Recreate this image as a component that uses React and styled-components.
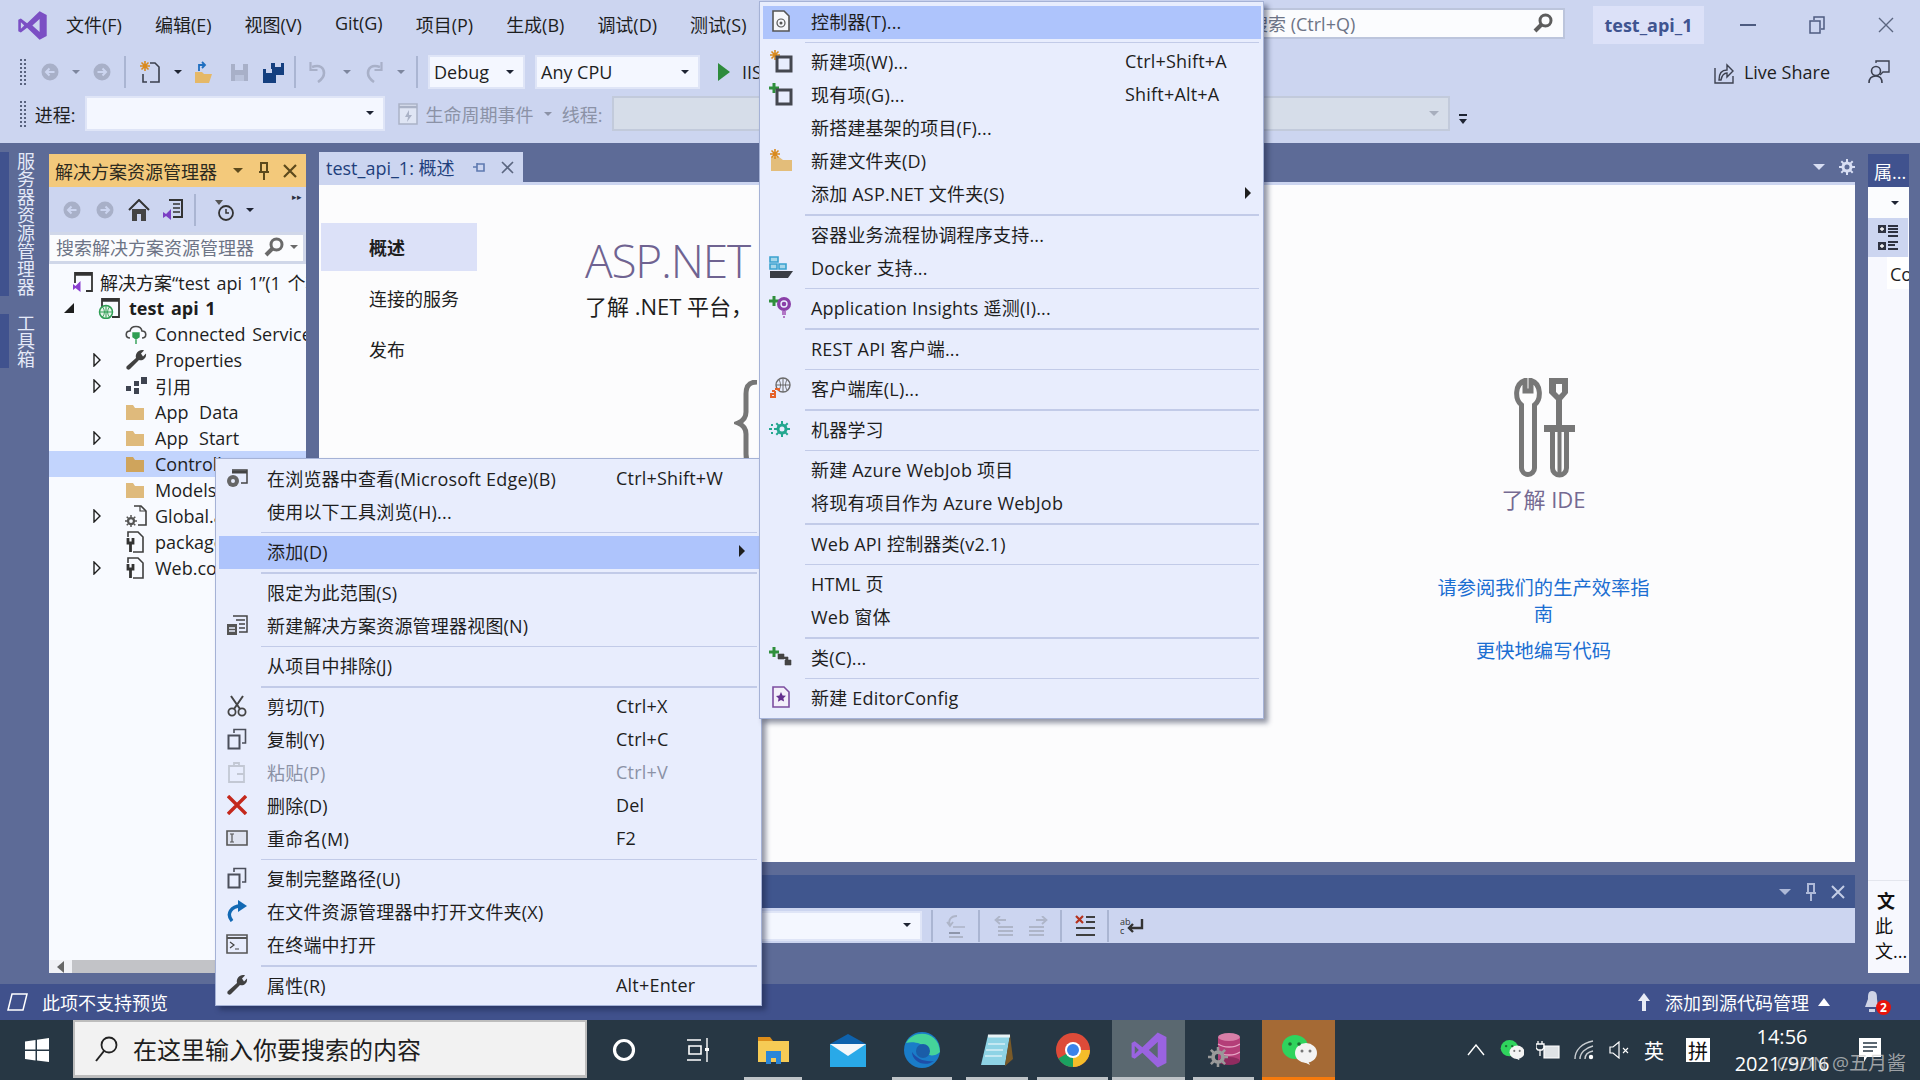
import React from "react";
import styled, { createGlobalStyle } from "styled-components";

const FONT = `"Open Sans", "Noto Sans CJK SC", sans-serif`;

const GlobalStyle = createGlobalStyle`
  html, body { margin: 0; padding: 0; background: #5d6b97; }
  body { font-family: ${FONT}; font-size: 18px; color: #1e1e1e; }
  * { box-sizing: border-box; }
`;

const Page = styled.div`
  position: relative;
  width: 1920px;
  height: 1080px;
  overflow: hidden;
  display: flex;
  flex-direction: column;
  background: #5d6b97;
`;

/* ---------- top chrome ---------- */
const TitleBar = styled.div`
  height: 50px;
  flex: none;
  display: flex;
  align-items: center;
  padding-left: 17px;
  background: #ccd5f0;
`;
const MenuList = styled.div`
  display: flex;
  gap: 33px;
  margin-left: 18px;
  padding-bottom: 2px;
  white-space: nowrap;
`;
const SearchBox = styled.div`
  margin-left: auto;
  margin-bottom: 3px;
  width: 324px;
  height: 31px;
  display: flex;
  align-items: center;
  justify-content: space-between;
  padding: 0 10px 2px 7px;
  background: #fbfcfe;
  border: 2px solid #bcc5dc;
  color: #6d7486;
`;
const ProjectBadge = styled.div`
  margin-left: 28px;
  width: 111px;
  height: 38px;
  display: flex;
  align-items: center;
  justify-content: center;
  background: #dce1f8;
  color: #3f5490;
  font-weight: 700;
  margin-right: 9px;
`;
const WinButton = styled.div`
  width: 69px;
  height: 38px;
  display: flex;
  align-items: center;
  justify-content: center;
`;
const ToolRow = styled.div`
  flex: none;
  height: ${(p) => p.$h}px;
  display: flex;
  align-items: ${(p) => (p.$top ? "flex-start" : "center")};
  padding: ${(p) => (p.$top ? "2px 0 0 19px" : "0 0 0 19px")};
  background: #ccd5f0;
  white-space: nowrap;
`;
const Grip = styled.div`
  width: 8px;
  height: ${(p) => p.$h || 28}px;
  flex: none;
  background-image: radial-gradient(#59637f 1px, transparent 1.2px);
  background-size: 4px 4px;
`;
const Slot = styled.div`
  flex: none;
  width: ${(p) => p.$w}px;
  height: ${(p) => p.$h || 34}px;
  display: flex;
  align-items: center;
  justify-content: center;
`;
const Gap = styled.div`
  flex: none;
  width: ${(p) => p.$w}px;
`;
const Sep = styled.div`
  flex: none;
  width: 2px;
  height: 32px;
  background: #aab5d2;
`;
const Combo = styled.div`
  flex: none;
  width: ${(p) => p.$w}px;
  height: ${(p) => p.$h || 34}px;
  display: flex;
  align-items: center;
  justify-content: space-between;
  padding: 0 9px 1px 4px;
  background: ${(p) => (p.$off ? "#d6dde9" : "#f4f7ff")};
  border: 2px solid ${(p) => (p.$off ? "#c2cadb" : "#dfe5f7")};
`;
const Caret = styled.span`
  flex: none;
  display: inline-block;
  width: 0;
  height: 0;
  border-left: ${(p) => p.$s || 4}px solid transparent;
  border-right: ${(p) => p.$s || 4}px solid transparent;
  border-top: ${(p) => p.$s || 4}px solid ${(p) => p.$c || "#1e2433"};
`;
const FadedLabel = styled.span`
  color: #8b92a6;
  white-space: nowrap;
`;
const ToolLabel = styled.span`
  margin-left: 10px;
`;
const RightGroup = styled.div`
  margin-left: auto;
  display: flex;
  align-items: center;
  padding-right: 30px;
`;

/* ---------- workspace ---------- */
const Workspace = styled.div`
  flex: 1;
  min-height: 0;
  display: flex;
  padding-top: 9px;
  background: #5d6b97;
`;
const LeftRail = styled.div`
  flex: none;
  width: 49px;
  display: flex;
  flex-direction: column;
  gap: 18px;
`;
const VTab = styled.div`
  width: 35px;
  height: ${(p) => p.$h}px;
  border-left: 9px solid #40528e;
  padding-left: 6px;
  writing-mode: vertical-rl;
  line-height: 20px;
  color: #e4e9f8;
  white-space: nowrap;
`;
const SolutionPanel = styled.div`
  flex: none;
  width: 257px;
  margin: 2px 0 11px;
  display: flex;
  flex-direction: column;
  background: #f8faff;
`;
const ActiveHeader = styled.div`
  flex: none;
  height: 33px;
  display: flex;
  align-items: center;
  padding-left: 6px;
  background: #f3c97b;
  color: #2c2a20;
  white-space: nowrap;
`;
const HeaderTools = styled.div`
  margin-left: auto;
  display: flex;
  align-items: center;
`;
const PanelTools = styled.div`
  flex: none;
  height: 45px;
  display: flex;
  align-items: center;
  background: #ccd5f0;
  position: relative;
`;
const Chevrons = styled.span`
  position: absolute;
  right: 4px;
  top: 3px;
  font-size: 9px;
  color: #2b3040;
`;
const PanelSearch = styled.div`
  flex: none;
  height: 32px;
  display: flex;
  align-items: center;
  padding: 0 5px 2px 6px;
  background: #fbfcfe;
  border: 3px solid #d0d7e9;
  border-left-width: 1px;
  color: #6d7486;
  white-space: nowrap;
  overflow: hidden;
`;
const Tree = styled.div`
  flex: 1;
  min-height: 0;
  padding-top: 5px;
  overflow: hidden;
`;
const TreeRow = styled.div`
  height: 26px;
  display: flex;
  align-items: center;
  padding-left: ${(p) => p.$pad}px;
  background: ${(p) => (p.$sel ? "#c2d4fd" : "transparent")};
  font-weight: ${(p) => (p.$bold ? 700 : 400)};
  word-spacing: ${(p) => p.$ws || 0}px;
  white-space: nowrap;
  overflow: hidden;
`;
const TreeExpander = styled.span`
  flex: none;
  width: ${(p) => p.$w}px;
  display: flex;
  align-items: center;
`;
const TreeIcon = styled.span`
  flex: none;
  width: ${(p) => p.$w || 30}px;
  display: flex;
  align-items: center;
`;
const HScroll = styled.div`
  flex: none;
  height: 13px;
  display: flex;
  align-items: center;
  background: #f0f1f5;
  padding-left: 8px;
  gap: 7px;
`;
const HThumb = styled.div`
  width: 150px;
  height: 13px;
  background: #c2c3c7;
`;

const Center = styled.div`
  flex: none;
  width: 1536px;
  margin-left: 13px;
  display: flex;
  flex-direction: column;
`;
const TabStrip = styled.div`
  flex: none;
  height: 30px;
  display: flex;
  align-items: center;
`;
const DocTab = styled.div`
  width: 204px;
  height: 30px;
  display: flex;
  align-items: center;
  padding-left: 7px;
  background: #ccd5f0;
  color: #1f3f7c;
  white-space: nowrap;
`;
const DocContent = styled.div`
  flex: none;
  height: 680px;
  border-top: 3px solid #ccd5f0;
  background: #fcfcfd;
  display: grid;
  grid-template-columns: 266px 851px 215px;
`;
const Nav = styled.div`
  padding: 38px 0 0 2px;
  display: flex;
  flex-direction: column;
  gap: 3px;
`;
const NavItem = styled.div`
  height: 48px;
  width: 156px;
  display: flex;
  align-items: center;
  padding-left: 48px;
  background: ${(p) => (p.$on ? "#dce1f8" : "transparent")};
  font-weight: ${(p) => (p.$on ? 700 : 400)};
`;
const Hero = styled.div`
  padding-top: 47px;
`;
const HeroTitle = styled.div`
  font-size: 46px;
  line-height: 56px;
  font-weight: 300;
  color: #6f6391;
  letter-spacing: -1.2px;
`;
const HeroText = styled.div`
  margin-top: 4px;
  font-size: 22px;
  line-height: 28px;
`;
const Brace = styled.svg`
  display: block;
  margin: 60px 0 0 149px;
`;
const IdeColumn = styled.div`
  padding-top: 193px;
  display: flex;
  flex-direction: column;
  align-items: center;
  text-align: center;
`;
const IdeLabel = styled.div`
  margin-top: 7px;
  font-size: 22px;
  line-height: 28px;
  color: #756a92;
`;
const IdeLink = styled.div`
  margin-top: ${(p) => p.$mt}px;
  font-size: 19.3px;
  line-height: 26px;
  color: #1b6ed2;
`;
const OutputPanel = styled.div`
  flex: none;
  margin-top: 13px;
  height: 68px;
  display: flex;
  flex-direction: column;
`;
const OutputHeader = styled.div`
  height: 33px;
  display: flex;
  align-items: center;
  justify-content: flex-end;
  background: #40568e;
`;
const OutputTools = styled.div`
  height: 35px;
  display: flex;
  align-items: center;
  background: #ccd5f0;
`;
const Props = styled.div`
  flex: none;
  width: 41px;
  margin: 2px 0 11px 13px;
  display: flex;
  flex-direction: column;
  background: #f7f8fe;
  overflow: hidden;
`;
const PropsTab = styled.div`
  height: 33px;
  display: flex;
  align-items: center;
  padding-left: 6px;
  background: #40528e;
  color: #fff;
  white-space: nowrap;
`;
const PropsCombo = styled.div`
  height: 31px;
  display: flex;
  align-items: center;
  justify-content: flex-end;
  padding-right: 10px;
  background: #fbfcfe;
`;
const PropsIcon = styled.div`
  height: 39px;
  margin-right: 1px;
  display: flex;
  align-items: center;
  justify-content: center;
  background: #ccd5f0;
`;
const PropsCell = styled.div`
  height: 32px;
  margin-left: 19px;
  padding: 5px 0 0 3px;
  background: #fff;
  overflow: hidden;
`;
const PropsNote = styled.div`
  margin-top: auto;
  border-top: 1px solid #e4e6ee;
  padding: 8px 0 0 7px;
  height: 93px;
  line-height: 25px;
  color: #111;
`;
const PropsNoteHead = styled.div`
  padding-left: 2px;
  font-weight: 700;
`;

/* ---------- context menus ---------- */
const Menu = styled.div`
  position: absolute;
  left: ${(p) => p.$x}px;
  top: ${(p) => p.$y}px;
  width: ${(p) => p.$w}px;
  padding: 3.5px 2px 2.5px 3px;
  background: #e8edfd;
  border: 1px solid #a5b2d6;
  box-shadow: 4px 4px 5px rgba(20, 28, 60, 0.45);
  white-space: nowrap;
  letter-spacing: 0.2px;
`;
const MenuRow = styled.div`
  height: 33px;
  padding-bottom: 3px;
  display: grid;
  grid-template-columns: 48px 1fr ${(p) => p.$short}px;
  align-items: center;
  background: ${(p) => (p.$hot ? "#aec4fc" : "transparent")};
  color: ${(p) => (p.$off ? "#8b92a6" : "#1e1e1e")};
`;
const MenuIcon = styled.span`
  width: 36px;
  display: flex;
  align-items: center;
  justify-content: center;
`;
const SubArrow = styled.span`
  justify-self: end;
  margin-right: ${(p) => p.$mr}px;
  width: 0;
  height: 0;
  border-top: 6px solid transparent;
  border-bottom: 6px solid transparent;
  border-left: 6px solid #1e1e1e;
`;
const MenuSep = styled.div`
  height: 1.5px;
  margin: 3px 2px 3px 42px;
  background: #c2cbe8;
`;

/* ---------- status + taskbar ---------- */
const StatusBar = styled.div`
  flex: none;
  height: 36px;
  display: flex;
  align-items: center;
  padding-left: 6px;
  background: #40518c;
  color: #fff;
  white-space: nowrap;
`;
const StatusRight = styled.div`
  margin-left: auto;
  display: flex;
  align-items: center;
  padding-right: 39px;
`;
const BellWrap = styled.span`
  position: relative;
  display: flex;
  margin-left: 33px;
`;
const Badge = styled.span`
  position: absolute;
  left: 13px;
  top: 10px;
  width: 15px;
  height: 15px;
  border-radius: 50%;
  background: #e8130c;
  color: #fff;
  font-size: 12px;
  font-weight: 700;
  line-height: 15px;
  text-align: center;
`;
const Taskbar = styled.div`
  flex: none;
  height: 60px;
  display: flex;
  background: #273744;
  color: #fff;
  white-space: nowrap;
`;
const TaskSearch = styled.div`
  flex: none;
  width: 514px;
  height: 58px;
  display: flex;
  align-items: center;
  gap: 15px;
  padding-left: 19px;
  background: #f2f2f2;
  border: 2px solid #bdbdbd;
  border-bottom-width: 3px;
  color: #1e1e1e;
  font-size: 24px;
`;
const TaskItem = styled.div`
  position: relative;
  flex: none;
  width: ${(p) => p.$w}px;
  display: flex;
  align-items: center;
  justify-content: center;
  background: ${(p) => p.$bg || "transparent"};
  font-size: ${(p) => p.$fs || 18}px;
  &::after {
    content: "";
    display: ${(p) => (p.$open ? "block" : "none")};
    position: absolute;
    left: ${(p) => p.$inset || 0}px;
    right: ${(p) => p.$inset || 0}px;
    bottom: 0;
    height: 3px;
    background: ${(p) => p.$line || "#bfc4c8"};
  }
`;
const Tray = styled.div`
  margin-left: 123px;
  display: flex;
`;
const Clock = styled.div`
  flex: none;
  width: 116px;
  padding-top: 3px;
  font-size: 20px;
  line-height: 27px;
  text-align: center;
`;
const ImeBox = styled.span`
  display: flex;
  align-items: center;
  justify-content: center;
  width: 24px;
  height: 24px;
  background: #fff;
  color: #111;
  font-size: 20px;
`;
const Watermark = styled.div`
  position: absolute;
  right: 14px;
  bottom: 4px;
  font-size: 19px;
  color: rgba(205, 205, 205, 0.72);
  white-space: nowrap;
`;

/* ---------- icons ---------- */
const Svg = ({ w = 20, h = 20, box, children }) => (
  <svg width={w} height={h} viewBox={box || `0 0 ${w} ${h}`} fill="none">
    {children}
  </svg>
);
const VsLogo = ({ w = 31, h = 31, c = "#7b4fc4" }) => (
  <Svg w={w} h={h} box="0 0 24 24">
    <path
      fillRule="evenodd"
      fill={c}
      d="M17.5 1 23 3.8v16.4L17.5 23l-9.7-9.3L3 17.5 1 16.5v-9L3 6.5l4.8 3.8zM17.5 7l-5.6 5 5.6 5zM3 9.5v5l2.6-2.5z"
    />
  </Svg>
);
const NavCircle = ({ dir = 1, c = "#a8b0c8" }) => (
  <Svg w={18} h={18}>
    <circle cx="9" cy="9" r="8.5" fill={c} />
    <path
      d={dir > 0 ? "M4.500 9h8M9.500 5.500 13 9l-3.500 3.500" : "M13.500 9h-8M8.500 5.500 5 9l3.500 3.500"}
      stroke="#ccd5f0"
      strokeWidth="2"
    />
  </Svg>
);
const Spark = ({ x, y }) => (
  <g stroke="#d98a1e" strokeWidth="1.6">
    <path d={`M${x - 5} ${y}h10M${x} ${y - 5}v10M${x - 3.5} ${y - 3.5}l7 7M${x + 3.5} ${y - 3.5}l-7 7`} />
  </g>
);
const Plus = ({ x, y }) => (
  <path d={`M${x - 5} ${y}h10M${x} ${y - 5}v10`} stroke="#2f8f3c" strokeWidth="3" />
);
const NewFile = () => (
  <Svg w={20} h={22}>
    <Spark x={5} y={5} />
    <path d="M10 2h5l4 4v15h-9" stroke="#3a3f4d" strokeWidth="1.6" />
    <path d="M3 13v8h4" stroke="#3a3f4d" strokeWidth="1.6" />
  </Svg>
);
const OpenFolder = () => (
  <Svg w={20} h={22}>
    <path d="M1 11h7l2 2h8l-3 9H1z" fill="#e5b867" />
    <path d="M5 10V4h6M8 1l3 3-3 3" stroke="#1f6fc0" strokeWidth="1.800" />
  </Svg>
);
const Floppy = ({ c = "#a8b0c8" }) => (
  <Svg w={19} h={19}>
    <path d="M1 1h17v17H1z" fill={c} />
    <path d="M5 1h8v6H5z" fill="#ccd5f0" />
    <path d="M5 12h9v6H5z" fill="#ccd5f0" opacity=".5" />
  </Svg>
);
const SaveAll = () => (
  <Svg w={23} h={21}>
    <path d="M9 1h13v12H9z" fill="#143f7f" />
    <path d="M13 1h6v4h-6z" fill="#ccd5f0" />
    <path d="M1 7h13v14H1z" fill="#143f7f" />
    <path d="M4 7h6v4H4z" fill="#ccd5f0" />
  </Svg>
);
const Undo = ({ flip }) => (
  <Svg w={20} h={22}>
    <g transform={flip ? "matrix(-1 0 0 1 20 0)" : undefined}>
      <path d="M4 6c8-3 12 1 12 6 0 4-3 7-6 9" stroke="#a8b0c8" strokeWidth="2.600" />
      <path d="M2.500 1v8h7" stroke="#a8b0c8" strokeWidth="2.200" />
    </g>
  </Svg>
);
const Play = () => (
  <Svg w={12} h={18}>
    <path d="M0 0l12 9-12 9z" fill="#2e8b3c" />
  </Svg>
);
const Magnifier = ({ c = "#5d5d5d", s = 20 }) => (
  <Svg w={s} h={s} box="0 0 20 20">
    <circle cx="12.5" cy="7.5" r="5.5" stroke={c} strokeWidth="3" />
    <path d="M8.5 11.5 2 18" stroke={c} strokeWidth="4" />
  </Svg>
);
const Cross = ({ c = "#5b6680", s = 14, sw = 1.6 }) => (
  <Svg w={s} h={s}>
    <path d={`M1 1 ${s - 1} ${s - 1}M${s - 1} 1 1 ${s - 1}`} stroke={c} strokeWidth={sw} />
  </Svg>
);
const Pin = ({ c = "#5d4a1c" }) => (
  <Svg w={12} h={18}>
    <path d="M3 1h6v9H3zM1 10h10M6 10v8" stroke={c} strokeWidth="2" />
  </Svg>
);
const SmallPin = () => (
  <Svg w={14} h={12}>
    <path d="M1 6h4M5 2v8h7V3H5" stroke="#5e79b0" strokeWidth="1.6" />
  </Svg>
);
const Gear = ({ c = "#d8def3", s = 16 }) => (
  <Svg w={s} h={s} box="0 0 16 16">
    <circle cx="8" cy="8" r="4" stroke={c} strokeWidth="3" />
    <path
      d="M8 0v3M8 13v3M0 8h3M13 8h3M2.3 2.3l2.1 2.1M11.6 11.6l2.1 2.1M13.7 2.3l-2.1 2.1M4.4 11.6l-2.1 2.1"
      stroke={c}
      strokeWidth="2"
    />
  </Svg>
);
const Home = () => (
  <Svg w={22} h={22}>
    <path d="M1 11 11 1l10 10" stroke="#333" strokeWidth="2" />
    <path d="M4 10v12h5v-7h4v7h5V10" fill="#444" />
  </Svg>
);
const VsDoc = () => (
  <Svg w={22} h={22}>
    <path d="M7 1h13v17h-9" stroke="#333" strokeWidth="2" />
    <path d="M11 5h7M11 9h7M11 13h7" stroke="#333" strokeWidth="1.6" />
    <path d="M1 13l3 2 5-5v11l-5-4-3 2z" fill="#7b3fc4" />
  </Svg>
);
const History = () => (
  <Svg w={20} h={24}>
    <circle cx="12" cy="15" r="7" stroke="#333" strokeWidth="1.8" />
    <path d="M12 11v4h3" stroke="#333" strokeWidth="1.5" />
    <path d="M1 2h8L5 7z" fill="#555" />
  </Svg>
);
const SlnIcon = () => (
  <Svg w={22} h={22}>
    <path d="M3 12V2h17v18h-6" stroke="#333" strokeWidth="1.8" />
    <path d="M3 3.500h17" stroke="#333" strokeWidth="2.500" />
    <path d="M1 13l2.500 2 5-5v11l-5-4L1 19z" fill="#8a3fd0" />
  </Svg>
);
const WebProject = () => (
  <Svg w={22} h={22}>
    <path d="M4 10V2h17v18h-7" stroke="#333" strokeWidth="1.8" />
    <path d="M4 3.500h17" stroke="#333" strokeWidth="2.500" />
    <circle cx="8" cy="15" r="6.500" fill="#e8f4ea" stroke="#2f9e54" strokeWidth="1.5" />
    <path d="M1.500 15h13M8 8.500v13M4.500 10c2.500 3 2.500 7 0 10M11.500 10c-2.500 3-2.500 7 0 10" stroke="#2f9e54" strokeWidth="1" />
  </Svg>
);
const CloudPlug = () => (
  <Svg w={22} h={22}>
    <path d="M5 15c-5 0-5-7 0-7 1-6 11-6 12 0 5 0 5 7 0 7" stroke="#4a4a4a" strokeWidth="1.6" />
    <path d="M8 10h6v4l-3 2-3-2zM11 16v5" fill="#2f9e54" stroke="#2f9e54" strokeWidth="1.4" />
  </Svg>
);
const Wrench = ({ c = "#404040", s = 22 }) => (
  <Svg w={s} h={s} box="0 0 22 22">
    <path
      d="M21 6c0 4-4 6-7 5l-9 9c-2 2-5-1-3-3l9-8c-1-4 2-8 6-8 1 0 1.500 0 2 .500l-3 3 2 3 3-3c.300.500 0 1 0 1.500z"
      fill={c}
    />
  </Svg>
);
const Refs = () => (
  <Svg w={22} h={20}>
    <path d="M16 1h6v7h-6zM9 5h5v5H9zM1 10h5v5H1zM9 12h5v6H9z" fill="#3e4350" />
  </Svg>
);
const Folder = ({ c = "#dfba7c" }) => (
  <Svg w={20} h={17}>
    <path d="M1 1h7l2 3h9v12H1z" fill={c} />
  </Svg>
);
const GearFile = () => (
  <Svg w={22} h={22}>
    <path d="M9 1h7l5 5v14h-8" stroke="#3f3f3f" strokeWidth="1.6" />
    <path d="M15 1v5h6" stroke="#3f3f3f" strokeWidth="1.2" />
    <g transform="translate(0 10)">
      <Gear c="#555" s={12} />
    </g>
  </Svg>
);
const ConfigFile = () => (
  <Svg w={20} h={22}>
    <path d="M3 6V1h10l5 5v15H8" stroke="#3f3f3f" strokeWidth="1.6" />
    <path d="M3 7v5h5V7M5.500 12v9" stroke="#333" strokeWidth="2.800" />
  </Svg>
);
const Triangle = ({ open }) =>
  open ? (
    <Svg w={10} h={10}>
      <path d="M10 0v10H0z" fill="#1e1e1e" />
    </Svg>
  ) : (
    <Svg w={8} h={14}>
      <path d="M1 1l6 6-6 6z" stroke="#1e1e1e" strokeWidth="1.4" fill="#f8faff" />
    </Svg>
  );
const BrowserIcon = () => (
  <Svg w={22} h={20}>
    <path d="M6 2h15v13h-6" stroke="#444" strokeWidth="1.5" />
    <path d="M6 4h15" stroke="#444" strokeWidth="3" />
    <circle cx="7" cy="13" r="6" fill="#666" />
    <circle cx="7" cy="13" r="2" fill="#e8edfd" />
  </Svg>
);
const SolutionView = () => (
  <Svg w={22} h={22}>
    <path d="M1 10h10v11H1z" fill="#555" />
    <path d="M7 2h14v16h-8" stroke="#444" strokeWidth="1.5" />
    <path d="M10 6h9M13 10h6M13 14h6" stroke="#444" strokeWidth="1.4" />
    <path d="M3 14h6M3 17h6" stroke="#e8edfd" strokeWidth="1.3" />
  </Svg>
);
const Scissors = () => (
  <Svg w={20} h={22}>
    <path d="M4 1l9 13M16 1 7 14" stroke="#444" strokeWidth="2" />
    <circle cx="5" cy="17" r="3.600" stroke="#444" strokeWidth="1.8" />
    <circle cx="15" cy="17" r="3.600" stroke="#444" strokeWidth="1.8" />
  </Svg>
);
const Copy = ({ c = "#4b4f5b" }) => (
  <Svg w={20} h={22}>
    <path d="M1.500 7.500h11v13h-11z" fill="#e8edfd" stroke={c} strokeWidth="2" />
    <path d="M7 5V1.500h11.500V15H15" stroke={c} strokeWidth="1.6" />
  </Svg>
);
const Paste = () => (
  <Svg w={20} h={22}>
    <path d="M2 5h15v16H2zM7 5V2h5v3M10 13h7v8h-7" stroke="#c3c8d4" strokeWidth="1.8" />
  </Svg>
);
const Rename = () => (
  <Svg w={22} h={16}>
    <path d="M1 1h20v14H1z" fill="#dfe3f0" stroke="#555" strokeWidth="1.6" />
    <path d="M4 4h4M4 12h4M6 4v8" stroke="#555" strokeWidth="1.2" />
  </Svg>
);
const OpenArrow = () => (
  <Svg w={22} h={22}>
    <path d="M6 21C0 14 5 6 15 6" stroke="#1269b4" strokeWidth="3.400" />
    <path d="M12 0l9 6-9 6z" fill="#1269b4" />
  </Svg>
);
const Terminal = () => (
  <Svg w={22} h={20}>
    <path d="M1 1h20v18H1z" fill="#e8edfd" stroke="#555" strokeWidth="1.6" />
    <path d="M1 4h20" stroke="#555" strokeWidth="2" />
    <path d="M4 8l4 3-4 3M9 15h4" stroke="#444" strokeWidth="1.2" />
  </Svg>
);
const AtFile = () => (
  <Svg w={20} h={22}>
    <path d="M2 1h11l5 5v15H2z" fill="#f6f7fb" stroke="#555" strokeWidth="1.6" />
    <circle cx="10" cy="13" r="4" stroke="#555" strokeWidth="1.2" />
    <circle cx="10" cy="13" r="1.500" fill="#555" />
  </Svg>
);
const NewItem = ({ add }) => (
  <Svg w={24} h={24}>
    {add ? <Plus x={5} y={6} /> : <Spark x={6} y={6} />}
    <path d="M8 8h14v14H8z" stroke="#44474f" strokeWidth="3" />
  </Svg>
);
const NewFolder = () => (
  <Svg w={24} h={24}>
    <path d="M2 9h8l4 3h9v11H2z" fill="#e3bd7a" />
    <Spark x={6} y={6} />
  </Svg>
);
const Docker = () => (
  <Svg w={24} h={22}>
    <path d="M1 1h8v5H1zM1 8h7v5H1zM10 8h7v5h-7z" stroke="#3aa2cf" strokeWidth="1.6" fill="#a8d7ea" />
    <path d="M1 15h23l-5 7H1z" fill="#3a3d45" />
  </Svg>
);
const Insights = () => (
  <Svg w={24} h={24}>
    <Plus x={5} y={6} />
    <circle cx="15" cy="9" r="7" fill="#8a3fa8" />
    <circle cx="15" cy="9" r="3" stroke="#e8edfd" strokeWidth="1.4" />
    <path d="M13 16h4v4h-4zM14 21h2v2h-2z" fill="#b176c6" />
  </Svg>
);
const ClientLib = () => (
  <Svg w={22} h={22}>
    <circle cx="13" cy="8" r="7" stroke="#6a6a6a" strokeWidth="1.4" />
    <path d="M6 8h14M13 1v14M9 3c2 3 2 7 0 10M17 3c-2 3-2 7 0 10" stroke="#6a6a6a" strokeWidth="1" />
    <path d="M2 14h3M5 12h4v2M5 14v6H1v-3h4" stroke="#e5622a" strokeWidth="2" />
  </Svg>
);
const MlIcon = () => (
  <Svg w={24} h={22}>
    <g transform="translate(5 3)">
      <Gear c="#23a78f" s={16} />
    </g>
    <path d="M0 11h3M2 7h2M2 15h2" stroke="#23a78f" strokeWidth="2" />
  </Svg>
);
const ClassIcon = () => (
  <Svg w={24} h={22}>
    <Plus x={5} y={6} />
    <path d="M9 8h6v5H9zM16 14h6v5h-6zM12 11h7v4" fill="#444" stroke="#444" strokeWidth=".6" />
  </Svg>
);
const EditorCfg = () => (
  <Svg w={18} h={22}>
    <path d="M1 1h11l5 5v15H1z" fill="#f3effa" stroke="#7c4ea0" strokeWidth="1.6" />
    <path d="M9 6l1.600 3.400 3.400.4-2.600 2.400.7 3.400L9 14l-3.100 1.800.7-3.400L4 10l3.400-.6z" fill="#65308f" />
  </Svg>
);
const ToolsIcon = () => (
  <Svg w={62} h={100}>
    <path
      d="M8.500 27C2 22 1 6 12 2.500V13h6V2.500C29 6 28 22 21.500 27v63a6.500 6.500 0 0 1-13 0z"
      stroke="#777"
      strokeWidth="5"
    />
    <path d="M36 0h19v15l-6 7v25h-6V22l-7-7z" fill="#777" />
    <path d="M43 6h6v8l-3 3-3-3z" fill="#fcfcfd" />
    <path d="M31 47h31v7H31z" fill="#777" />
    <path d="M39.500 54v36a7 7 0 0 0 14 0V54" stroke="#777" strokeWidth="5" />
    <path d="M46.500 54v42" stroke="#777" strokeWidth="4" />
  </Svg>
);
const WinLogo = () => (
  <Svg w={24} h={24}>
    <path d="M0 3.500 10.500 2v9.500H0zM12 1.800 24 0v11.500H12zM0 13h10.500v9.500L0 21zM12 13h12v11l-12-1.500z" fill="#fff" />
  </Svg>
);
const TaskView = () => (
  <Svg w={24} h={24}>
    <path d="M2 2h14M2 22h14M4 8h12v8H4z" stroke="#fff" strokeWidth="1.600" />
    <path d="M22 0v24" stroke="#fff" strokeWidth="1.400" />
    <path d="M20 10h4v3h-4z" fill="#fff" />
  </Svg>
);
const Explorer = () => (
  <Svg w={33} h={28}>
    <path d="M1 1h12l3 4H1z" fill="#dd8d1a" />
    <path d="M1 5h31v21H1z" fill="#f6cb55" />
    <path d="M9 15h15v13h-5v-6h-5v6H9z" fill="#2a86d8" />
  </Svg>
);
const Mail = () => (
  <Svg w={36} h={33}>
    <path d="M0 10h36v23H0z" fill="#29a9e8" />
    <path d="M0 10h36L18 22z" fill="#f4f7fa" />
    <path d="M18 0 36 10H0z" fill="#0e62ad" />
  </Svg>
);
const Edge = () => (
  <Svg w={36} h={36}>
    <circle cx="18" cy="18" r="18" fill="#1a7cc8" />
    <path d="M2 11C9-3 35-2 36 20c-6 6-17 4-14-4-4-5-13-7-20-5z" fill="#45d39a" />
    <circle cx="19" cy="19" r="7" fill="#1a5da8" />
    <path d="M8 20c0 9 12 16 22 9-10 1-17-2-22-9z" fill="#1e4ea8" />
  </Svg>
);
const Notes = () => (
  <Svg w={34} h={33}>
    <path d="M8 1h22l-5 30H1z" fill="#8ed3e5" />
    <path d="M25 31l5-30 3 24-8 7z" fill="#7a5a28" />
    <path d="M8 2h22" stroke="#e8f3f6" strokeWidth="3" />
    <path d="M8 10h17M6 16h17M5 22h17" stroke="#d8f0f6" strokeWidth="1.400" />
  </Svg>
);
const Chrome = () => (
  <Svg w={34} h={34}>
    <circle cx="17" cy="17" r="17" fill="#dd4b39" />
    <path d="M17 17h17A17 17 0 0 1 17 34z" fill="#f4bd2a" />
    <path d="M17 17v17A17 17 0 0 1 2.300 25.500z" fill="#1ba160" />
    <circle cx="17" cy="17" r="8" fill="#fff" />
    <circle cx="17" cy="17" r="6" fill="#3a83ea" />
  </Svg>
);
const DbIcon = () => (
  <Svg w={32} h={34}>
    <path d="M10 4h22v24H10z" fill="#b43e78" />
    <ellipse cx="21" cy="4" rx="11" ry="4" fill="#d77fa8" />
    <ellipse cx="21" cy="28" rx="11" ry="4" fill="#8f2c60" />
    <path d="M10 11c6 4 16 4 22 0M10 19c6 4 16 4 22 0" stroke="#e6a4c4" strokeWidth="1.400" />
    <g transform="translate(0 14) scale(1.250)">
      <Gear c="#9a9a9a" s={16} />
    </g>
  </Svg>
);
const WeChat = ({ s = 1 }) => (
  <Svg w={36 * s} h={30 * s} box="0 0 36 30">
    <ellipse cx="14" cy="12" rx="13" ry="12" fill="#2fd45d" />
    <ellipse cx="25" cy="18" rx="11" ry="10" fill="#f3f3f3" />
    <path d="M27 26l2 4-6-3z" fill="#f3f3f3" />
    <circle cx="9" cy="9" r="1.800" fill="#1b6e34" />
    <circle cx="18" cy="9" r="1.800" fill="#1b6e34" />
    <circle cx="21" cy="16" r="1.500" fill="#777" />
    <circle cx="29" cy="16" r="1.500" fill="#777" />
  </Svg>
);
const Battery = () => (
  <Svg w={24} h={20}>
    <path d="M8 6h15v12H8z" fill="#dfe3e6" stroke="#fff" strokeWidth="1.200" />
    <path d="M2 1v3M6 1v3M0 4h8v4l-2 2H2L0 8zM4 10v6" stroke="#fff" strokeWidth="1.300" />
  </Svg>
);
const Wifi = () => (
  <Svg w={20} h={20}>
    <path d="M1 19C1 10 8 3 19 1M6 19c0-6 5-11 13-13M11 19c0-4 3-7 8-8" stroke="#c9ced2" strokeWidth="1.400" />
    <circle cx="17" cy="17" r="2.200" fill="#fff" />
  </Svg>
);
const Speaker = () => (
  <Svg w={20} h={18}>
    <path d="M1 6h3l6-5v16l-6-5H1z" stroke="#fff" strokeWidth="1.200" />
    <path d="M14 7l5 5M19 7l-5 5" stroke="#fff" strokeWidth="1.100" />
  </Svg>
);
const NotifIcon = () => (
  <Svg w={24} h={26}>
    <path d="M1 1h22v19H9l-3 5v-5H1z" fill="#fff" />
    <path d="M5 6h14M5 10h14M5 14h10" stroke="#273744" strokeWidth="1.400" />
  </Svg>
);
const ShareIcon = () => (
  <Svg w={20} h={24}>
    <path d="M1 8v15h18v-7" stroke="#3c4150" strokeWidth="1.400" />
    <path d="M5 20c0-7 3-10 8-10V5l6 6-6 6v-4c-3 0-5 2-6 7z" stroke="#3c4150" strokeWidth="1.400" />
  </Svg>
);
const Feedback = () => (
  <Svg w={22} h={24}>
    <circle cx="8" cy="11" r="4.500" stroke="#3c4150" strokeWidth="1.600" />
    <path d="M1 23c0-5 3-7 7-7s6 2 6 7" stroke="#3c4150" strokeWidth="1.600" />
    <path d="M8 3V1h13v11h-6l-3 3" stroke="#3c4150" strokeWidth="1.400" />
  </Svg>
);
const Lifecycle = () => (
  <Svg w={20} h={22}>
    <path d="M1 1h18v20H1z" fill="#dfe5f4" stroke="#aab2c6" strokeWidth="1.500" />
    <path d="M1 4h18" stroke="#aab2c6" strokeWidth="2.500" />
    <path d="M11 7l-4 7h3l-1 5 5-7h-3z" fill="#aab2c6" />
  </Svg>
);
const PropsGrid = () => (
  <Svg w={22} h={28}>
    <path d="M1 1h8v8H1zM1 18h8v8H1z" fill="#2f3240" />
    <path d="M3 5h4M5 3v4M3 22h4M5 20v4" stroke="#fff" strokeWidth="1.300" />
    <path d="M11 2h10M11 5h10M11 8h10M11 12h10M11 18h10M11 21h7M11 25h10" stroke="#2f3240" strokeWidth="1.800" />
  </Svg>
);
const OutUndo = () => (
  <Svg w={20} h={24}>
    <path d="M11 2C4 2 2 7 4 11M1 8l3 4 3-4" stroke="#aeb5c8" strokeWidth="1.800" />
    <path d="M7 13h12" stroke="#aeb5c8" strokeWidth="1.600" />
    <path d="M3 18h11v2H3z" fill="#8e96ab" />
    <path d="M3 23h14" stroke="#aeb5c8" strokeWidth="2" />
  </Svg>
);
const OutIndent = ({ flip }) => (
  <Svg w={20} h={20}>
    <g transform={flip ? "matrix(-1 0 0 1 20 0)" : undefined}>
      <path d="M12 4H2M6 0 1.500 4 6 8" stroke="#aeb5c8" strokeWidth="1.800" />
      <path d="M4 11h15M4 15h15M4 19h15" stroke="#aeb5c8" strokeWidth="2" />
    </g>
  </Svg>
);
const OutList = () => (
  <Svg w={20} h={22}>
    <path d="M1 1l7 7M8 1 1 8" stroke="#b5321d" strokeWidth="2.200" />
    <path d="M11 2h9M11 7h9M1 13h19M1 20h19" stroke="#3f3f3f" strokeWidth="2.200" />
  </Svg>
);
const OutWrap = () => (
  <Svg w={24} h={20}>
    <path d="M22 3v9H9M13 8l-4 4 4 4" stroke="#333" strokeWidth="2.400" />
    <text x="0" y="9" fontSize="9" fill="#333" fontFamily="Open Sans">ab</text>
    <text x="0" y="18" fontSize="9" fill="#333" fontFamily="Open Sans">c</text>
  </Svg>
);

/* ---------- data ---------- */
const treeRows = [
  { pad: 23, icon: <SlnIcon />, iconW: 28, ws: 2, label: "解决方案“test api 1”(1 个项目/共 1 个)" },
  { pad: 15, tri: "open", triW: 34, icon: <WebProject />, iconW: 31, ws: 2, label: "test api 1", bold: true },
  { pad: 76, icon: <CloudPlug />, ws: 2, label: "Connected Services" },
  { pad: 44, tri: "closed", triW: 32, icon: <Wrench />, label: "Properties" },
  { pad: 44, tri: "closed", triW: 32, icon: <Refs />, label: "引用" },
  { pad: 76, icon: <Folder />, ws: 6, label: "App Data" },
  { pad: 44, tri: "closed", triW: 32, icon: <Folder />, ws: 6, label: "App Start" },
  { pad: 76, icon: <Folder c="#cfa45c" />, label: "Controllers", sel: true },
  { pad: 76, icon: <Folder />, label: "Models" },
  { pad: 44, tri: "closed", triW: 32, icon: <GearFile />, label: "Global.asax" },
  { pad: 76, icon: <ConfigFile />, label: "packages.config" },
  { pad: 44, tri: "closed", triW: 32, icon: <ConfigFile />, label: "Web.config" },
];

const leftMenu = [
  { icon: <BrowserIcon />, label: "在浏览器中查看(Microsoft Edge)(B)", key: "Ctrl+Shift+W" },
  { label: "使用以下工具浏览(H)..." },
  "sep",
  { label: "添加(D)", hot: true, sub: true },
  "sep",
  { label: "限定为此范围(S)" },
  { icon: <SolutionView />, label: "新建解决方案资源管理器视图(N)" },
  "sep",
  { label: "从项目中排除(J)" },
  "sep",
  { icon: <Scissors />, label: "剪切(T)", key: "Ctrl+X" },
  { icon: <Copy />, label: "复制(Y)", key: "Ctrl+C" },
  { icon: <Paste />, label: "粘贴(P)", key: "Ctrl+V", off: true },
  { icon: <Cross c="#c4281c" s={20} sw={3.4} />, label: "删除(D)", key: "Del" },
  { icon: <Rename />, label: "重命名(M)", key: "F2" },
  "sep",
  { icon: <Copy />, label: "复制完整路径(U)" },
  { icon: <OpenArrow />, label: "在文件资源管理器中打开文件夹(X)" },
  { icon: <Terminal />, label: "在终端中打开" },
  "sep",
  { icon: <Wrench />, label: "属性(R)", key: "Alt+Enter" },
];

const rightMenu = [
  { icon: <AtFile />, label: "控制器(T)...", hot: true },
  "sep",
  { icon: <NewItem />, label: "新建项(W)...", key: "Ctrl+Shift+A" },
  { icon: <NewItem add />, label: "现有项(G)...", key: "Shift+Alt+A" },
  { label: "新搭建基架的项目(F)..." },
  { icon: <NewFolder />, label: "新建文件夹(D)" },
  { label: "添加 ASP.NET 文件夹(S)", sub: true },
  "sep",
  { label: "容器业务流程协调程序支持..." },
  { icon: <Docker />, label: "Docker 支持..." },
  "sep",
  { icon: <Insights />, label: "Application Insights 遥测(I)..." },
  "sep",
  { label: "REST API 客户端..." },
  "sep",
  { icon: <ClientLib />, label: "客户端库(L)..." },
  "sep",
  { icon: <MlIcon />, label: "机器学习" },
  "sep",
  { label: "新建 Azure WebJob 项目" },
  { label: "将现有项目作为 Azure WebJob" },
  "sep",
  { label: "Web API 控制器类(v2.1)" },
  "sep",
  { label: "HTML 页" },
  { label: "Web 窗体" },
  "sep",
  { icon: <ClassIcon />, label: "类(C)..." },
  "sep",
  { icon: <EditorCfg />, label: "新建 EditorConfig" },
];

const menuNames = ["文件(F)", "编辑(E)", "视图(V)", "Git(G)", "项目(P)", "生成(B)", "调试(D)", "测试(S)"];

const ContextMenu = ({ x, y, w, short, arrow, items }) => (
  <Menu $x={x} $y={y} $w={w}>
    {items.map((item, i) =>
      item === "sep" ? (
        <MenuSep key={i} />
      ) : (
        <MenuRow key={i} $short={short} $hot={item.hot} $off={item.off}>
          <MenuIcon>{item.icon}</MenuIcon>
          <span>{item.label}</span>
          {item.sub ? <SubArrow $mr={arrow} /> : <span>{item.key}</span>}
        </MenuRow>
      )
    )}
  </Menu>
);

const App = () => {
  return (
    <Page>
      <GlobalStyle />
      <TitleBar>
        <VsLogo />
        <MenuList>
          {menuNames.map((m) => (
            <span key={m}>{m}</span>
          ))}
        </MenuList>
        <SearchBox>
          <span>搜索 (Ctrl+Q)</span>
          <Magnifier />
        </SearchBox>
        <ProjectBadge>test_api_1</ProjectBadge>
        <WinButton>
          <Svg w={16} h={2}>
            <path d="M0 1h16" stroke="#4d5b80" strokeWidth="2" />
          </Svg>
        </WinButton>
        <WinButton>
          <Svg w={16} h={18}>
            <path d="M1 5h10v12H1zM5 4V1h10v12h-3" stroke="#4d5b80" strokeWidth="1.500" />
          </Svg>
        </WinButton>
        <WinButton>
          <Cross s={16} sw={1.4} />
        </WinButton>
      </TitleBar>

      <ToolRow $h={44}>
        <Grip />
        <Gap $w={9} />
        <Slot $w={28}><NavCircle dir={-1} /></Slot>
        <Slot $w={24}><Caret $c="#7d869e" /></Slot>
        <Slot $w={28}><NavCircle /></Slot>
        <Slot $w={18}><Sep /></Slot>
        <Slot $w={32}><NewFile /></Slot>
        <Slot $w={24}><Caret /></Slot>
        <Slot $w={28}><OpenFolder /></Slot>
        <Slot $w={42}><Floppy /></Slot>
        <Slot $w={26}><SaveAll /></Slot>
        <Slot $w={18}><Sep /></Slot>
        <Slot $w={28}><Undo /></Slot>
        <Slot $w={30}><Caret $c="#7d869e" /></Slot>
        <Slot $w={24}><Undo flip /></Slot>
        <Slot $w={30}><Caret $c="#7d869e" /></Slot>
        <Sep />
        <Gap $w={10} />
        <Combo $w={97}>
          <span>Debug</span>
          <Caret />
        </Combo>
        <Gap $w={10} />
        <Combo $w={165}>
          <span>Any CPU</span>
          <Caret />
        </Combo>
        <Gap $w={18} />
        <Play />
        <Gap $w={12} />
        <span>IIS Express</span>
        <RightGroup>
          <ShareIcon />
          <ToolLabel>Live Share</ToolLabel>
          <Gap $w={38} />
          <Feedback />
        </RightGroup>
      </ToolRow>

      <ToolRow $h={49} $top>
        <Slot $w={8} $h={35}><Grip $h={28} /></Slot>
        <Gap $w={8} />
        <Slot $w={40} $h={35}>进程:</Slot>
        <Gap $w={10} />
        <Combo $w={300} $h={35}>
          <span />
          <Caret />
        </Combo>
        <Gap $w={13} />
        <Slot $w={20} $h={35}><Lifecycle /></Slot>
        <Gap $w={7} />
        <Slot $w={109} $h={35}><FadedLabel>生命周期事件</FadedLabel></Slot>
        <Slot $w={28} $h={35}><Caret $c="#8b92a6" /></Slot>
        <Slot $w={40} $h={35}><FadedLabel>线程:</FadedLabel></Slot>
        <Gap $w={10} />
        <Combo $w={838} $h={35} $off>
          <span />
          <Caret $c="#a7aebd" $s={5} />
        </Combo>
        <Gap $w={8} />
        <Slot $w={10} $h={48}>
          <Svg w={10} h={12}>
            <path d="M1 1h8" stroke="#1e2433" strokeWidth="2" />
            <path d="M1 5h8l-4 5z" fill="#1e2433" />
          </Svg>
        </Slot>
      </ToolRow>

      <Workspace>
        <LeftRail>
          <VTab $h={144}>服务器资源管理器</VTab>
          <VTab $h={54}>工具箱</VTab>
        </LeftRail>

        <SolutionPanel>
          <ActiveHeader>
            解决方案资源管理器
            <HeaderTools>
              <Slot $w={32} $h={24}><Caret $c="#5d4a1c" $s={5} /></Slot>
              <Slot $w={20} $h={24}><Pin /></Slot>
              <Slot $w={32} $h={24}><Cross c="#5d4a1c" s={14} sw={2.200} /></Slot>
            </HeaderTools>
          </ActiveHeader>
          <PanelTools>
            <Gap $w={14} />
            <Slot $w={18}><NavCircle dir={-1} /></Slot>
            <Gap $w={15} />
            <Slot $w={18}><NavCircle /></Slot>
            <Gap $w={14} />
            <Slot $w={22}><Home /></Slot>
            <Gap $w={12} />
            <Slot $w={22}><VsDoc /></Slot>
            <Gap $w={10} />
            <Sep />
            <Gap $w={18} />
            <Slot $w={20}><History /></Slot>
            <Gap $w={12} />
            <Caret />
            <Chevrons>▸▸</Chevrons>
          </PanelTools>
          <PanelSearch>
            搜索解决方案资源管理器
            <HeaderTools>
              <Magnifier c="#6a6a6a" />
              <Gap $w={6} />
              <Caret $c="#6a6a6a" />
            </HeaderTools>
          </PanelSearch>
          <Tree>
            {treeRows.map((r) => (
              <TreeRow key={r.label} $pad={r.pad} $sel={r.sel} $bold={r.bold} $ws={r.ws}>
                {r.tri && (
                  <TreeExpander $w={r.triW}>
                    <Triangle open={r.tri === "open"} />
                  </TreeExpander>
                )}
                <TreeIcon $w={r.iconW}>{r.icon}</TreeIcon>
                {r.label}
              </TreeRow>
            ))}
          </Tree>
          <HScroll>
            <Svg w={8} h={12}>
              <path d="M7 0v12L0 6z" fill="#666" />
            </Svg>
            <HThumb />
          </HScroll>
        </SolutionPanel>

        <Center>
          <TabStrip>
            <DocTab>
              test_api_1: 概述
              <Gap $w={17} />
              <SmallPin />
              <Gap $w={15} />
              <Cross s={13} />
            </DocTab>
            <HeaderTools>
              <Caret $c="#d8def3" $s={6} />
              <Gap $w={14} />
              <Gear />
              <Gap $w={0} />
            </HeaderTools>
          </TabStrip>
          <DocContent>
            <Nav>
              <NavItem $on>概述</NavItem>
              <NavItem>连接的服务</NavItem>
              <NavItem>发布</NavItem>
            </Nav>
            <Hero>
              <HeroTitle>ASP.NET</HeroTitle>
              <HeroText>了解 .NET 平台，</HeroText>
              <Brace width="26" height="90" viewBox="0 0 26 90" fill="none">
                <path
                  d="M23 2c-8 0-11 4-11 12v18c0 6-3 9-8 11 5 2 8 5 8 11v20c0 8 3 13 11 13"
                  stroke="#767676"
                  strokeWidth="5"
                />
              </Brace>
            </Hero>
            <IdeColumn>
              <ToolsIcon />
              <IdeLabel>了解 IDE</IdeLabel>
              <IdeLink $mt={62}>请参阅我们的生产效率指南</IdeLink>
              <IdeLink $mt={11}>更快地编写代码</IdeLink>
            </IdeColumn>
          </DocContent>
          <OutputPanel>
            <OutputHeader>
              <Caret $c="#aeb9d8" $s={6} />
              <Gap $w={14} />
              <Pin c="#aeb9d8" />
              <Gap $w={14} />
              <Cross c="#c3cde6" s={14} sw={2} />
              <Gap $w={10} />
            </OutputHeader>
            <OutputTools>
              <Combo $w={603} $h={30}>
                <span />
                <Caret />
              </Combo>
              <Gap $w={9} />
              <Sep />
              <Slot $w={45}><OutUndo /></Slot>
              <Sep />
              <Slot $w={48}><OutIndent /></Slot>
              <Slot $w={20}><OutIndent flip /></Slot>
              <Gap $w={12} />
              <Sep />
              <Slot $w={45}><OutList /></Slot>
              <Sep />
              <Slot $w={46}><OutWrap /></Slot>
            </OutputTools>
          </OutputPanel>
        </Center>

        <Props>
          <PropsTab>属...</PropsTab>
          <PropsCombo><Caret /></PropsCombo>
          <PropsIcon><PropsGrid /></PropsIcon>
          <PropsCell>Co</PropsCell>
          <PropsNote>
            <PropsNoteHead>文</PropsNoteHead>
            此
            <br />
            文...
          </PropsNote>
        </Props>
      </Workspace>

      <StatusBar>
        <Svg w={22} h={20}>
          <path d="M6 2h15l-4 16H2z" stroke="#fff" strokeWidth="1.500" />
        </Svg>
        <Gap $w={14} />
        此项不支持预览
        <StatusRight>
          <Svg w={14} h={20}>
            <path d="M7 1 13 9H9v10H5V9H1z" fill="#e8ebf5" />
          </Svg>
          <Gap $w={14} />
          添加到源代码管理
          <Gap $w={9} />
          <Svg w={12} h={8}>
            <path d="M6 0l6 8H0z" fill="#fff" />
          </Svg>
          <BellWrap>
            <Svg w={18} h={24}>
              <path d="M9 1c5 0 5 4 5 8l1 8H2l3-8c0-4 0-8 4-8zM6 19h6v3H6z" fill="#cfd4e6" />
            </Svg>
            <Badge>2</Badge>
          </BellWrap>
        </StatusRight>
      </StatusBar>

      <Taskbar>
        <TaskItem $w={73}><WinLogo /></TaskItem>
        <TaskSearch>
          <Svg w={24} h={26}>
            <circle cx="15" cy="9" r="7.500" stroke="#222" strokeWidth="1.800" />
            <path d="M10 15 2 25" stroke="#222" strokeWidth="2" />
          </Svg>
          在这里输入你要搜索的内容
        </TaskSearch>
        <TaskItem $w={74}>
          <Svg w={24} h={24}>
            <circle cx="12" cy="12" r="9.500" stroke="#fff" strokeWidth="3.200" />
          </Svg>
        </TaskItem>
        <TaskItem $w={72}><TaskView /></TaskItem>
        <TaskItem $w={80} $open $inset={11}><Explorer /></TaskItem>
        <TaskItem $w={70}><Mail /></TaskItem>
        <TaskItem $w={78} $open $inset={9}><Edge /></TaskItem>
        <TaskItem $w={72} $open $inset={5}><Notes /></TaskItem>
        <TaskItem $w={79} $open $inset={4}><Chrome /></TaskItem>
        <TaskItem $w={73} $bg="#5a6870" $open><VsLogo w={38} h={38} c="#9a63e0" /></TaskItem>
        <TaskItem $w={77} $open $inset={8}><DbIcon /></TaskItem>
        <TaskItem $w={73} $bg="#a56a35" $open $line="#f77a0c"><WeChat /></TaskItem>
        <Tray>
          <TaskItem $w={36}>
            <Svg w={18} h={12}>
              <path d="M1 11 9 1l8 10" stroke="#fff" strokeWidth="1.400" />
            </Svg>
          </TaskItem>
          <TaskItem $w={36}><WeChat s={0.68} /></TaskItem>
          <TaskItem $w={36}><Battery /></TaskItem>
          <TaskItem $w={36}><Wifi /></TaskItem>
          <TaskItem $w={34}><Speaker /></TaskItem>
          <TaskItem $w={36} $fs={20}>英</TaskItem>
          <TaskItem $w={52}><ImeBox>拼</ImeBox></TaskItem>
          <Clock>
            14:56
            <br />
            2021/9/16
          </Clock>
          <TaskItem $w={60}><NotifIcon /></TaskItem>
        </Tray>
        <Watermark>CSDN @五月酱</Watermark>
      </Taskbar>

      <ContextMenu x={215} y={458} w={547} short={143} arrow={14} items={leftMenu} />
      <ContextMenu x={759} y={1} w={505} short={136} arrow={10} items={rightMenu} />
    </Page>
  );
};

export default App;
